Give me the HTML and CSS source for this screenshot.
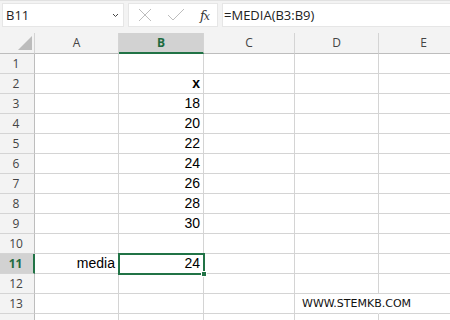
FILE: index.html
```html
<!DOCTYPE html>
<html>
<head>
<meta charset="utf-8">
<link rel="stylesheet" href="styles.css">
</head>
<body>
<div class="topbar">
  <div class="namebox"><span class="name">B11</span>
    <svg class="chev" width="7" height="5" viewBox="0 0 7 5"><path d="M1 1 L3.5 3.5 L6 1" fill="none" stroke="#444" stroke-width="1"/></svg>
  </div>
  <div class="fbtns">
    <svg class="ico" width="14" height="14" viewBox="0 0 14 14"><path d="M1 1 L13 13 M13 1 L1 13" stroke="#bdbdbd" stroke-width="1" fill="none"/></svg>
    <svg class="ico" width="18" height="14" viewBox="0 0 18 14"><path d="M1 7 L6 12 L17 1" stroke="#bdbdbd" stroke-width="1" fill="none"/></svg>
    <span class="fx"><i>f</i><i class="x">x</i></span>
  </div>
  <div class="finput">=MEDIA(B3:B9)</div>
</div>
<div class="sheet">
  <div class="corner"><svg width="14" height="14" viewBox="0 0 14 14"><path d="M14 0 L14 14 L0 14 Z" fill="#bcbcbc"/></svg></div>
  <div class="ch">A</div><div class="ch sel">B</div><div class="ch">C</div><div class="ch">D</div><div class="ch">E</div>

  <div class="rh">1</div><div class="c"></div><div class="c"></div><div class="c"></div><div class="c"></div><div class="c"></div>
  <div class="rh">2</div><div class="c"></div><div class="c num b">x</div><div class="c"></div><div class="c"></div><div class="c"></div>
  <div class="rh">3</div><div class="c"></div><div class="c num">18</div><div class="c"></div><div class="c"></div><div class="c"></div>
  <div class="rh">4</div><div class="c"></div><div class="c num">20</div><div class="c"></div><div class="c"></div><div class="c"></div>
  <div class="rh">5</div><div class="c"></div><div class="c num">22</div><div class="c"></div><div class="c"></div><div class="c"></div>
  <div class="rh">6</div><div class="c"></div><div class="c num">24</div><div class="c"></div><div class="c"></div><div class="c"></div>
  <div class="rh">7</div><div class="c"></div><div class="c num">26</div><div class="c"></div><div class="c"></div><div class="c"></div>
  <div class="rh">8</div><div class="c"></div><div class="c num">28</div><div class="c"></div><div class="c"></div><div class="c"></div>
  <div class="rh">9</div><div class="c"></div><div class="c num">30</div><div class="c"></div><div class="c"></div><div class="c"></div>
  <div class="rh">10</div><div class="c"></div><div class="c"></div><div class="c"></div><div class="c"></div><div class="c"></div>
  <div class="rh sel">11</div><div class="c num">media</div><div class="c num active">24<span class="handle"></span></div><div class="c"></div><div class="c"></div><div class="c"></div>
  <div class="rh">12</div><div class="c"></div><div class="c"></div><div class="c"></div><div class="c"></div><div class="c"></div>
  <div class="rh">13</div><div class="c"></div><div class="c"></div><div class="c"></div><div class="c wm">WWW.STEMKB.COM</div><div class="c"></div>
  <div class="rh"></div><div class="c"></div><div class="c"></div><div class="c"></div><div class="c"></div><div class="c"></div>
</div>
</body>
</html>
```
FILE: styles.css
```css
* { box-sizing: border-box; }
html, body { margin: 0; padding: 0; background: #fff; overflow: hidden; width: 450px; height: 320px; }
body { font-family: "Open Sans", "Noto Sans", sans-serif; }

.topbar {
  height: 33px;
  background: #f3f3f3;
  border-top: 1px solid #e1e1e1;
  display: flex;
  align-items: flex-start;
  padding: 2px 0 0 2px;
  gap: 4px;
}
.namebox {
  width: 122px;
  height: 24px;
  background: #fff;
  border: 1px solid #e6e6e6;
  display: flex;
  align-items: center;
  justify-content: space-between;
  padding: 0 4px 0 3px;
  font-size: 13px;
  color: #222;
}
.namebox .chev { margin-top: 1px; }
.fbtns {
  width: 90px;
  height: 24px;
  background: #fff;
  border: 1px solid #e6e6e6;
  display: flex;
  align-items: center;
  padding: 0 8px 0 9px;
  justify-content: space-between;
}
.fx {
  font-family: "DejaVu Serif", "Liberation Serif", serif;
  font-size: 13px;
  color: #333;
  letter-spacing: -1px;
}
.fx .x { font-size: 11px; }
.finput {
  flex: 1;
  height: 24px;
  background: #fff;
  border: 1px solid #e6e6e6;
  border-right: none;
  font-size: 13px;
  color: #222;
  line-height: 22px;
  padding-left: 1px;
}

.sheet {
  display: grid;
  grid-template-columns: 35px 84px 85px 91px 84px 90px;
  grid-template-rows: 21px repeat(14, 20px);
}
.corner {
  background: #f3f3f3;
  border-right: 1px solid #d4d4d4;
  border-bottom: 1px solid #bdbdbd;
  display: flex;
  align-items: flex-end;
  justify-content: flex-end;
  padding: 0 2px 3px 0;
}
.ch {
  background: #f3f3f3;
  border-right: 1px solid #d4d4d4;
  border-bottom: 1px solid #bdbdbd;
  font-size: 12px;
  color: #444;
  text-align: center;
  line-height: 19px;
}
.ch.sel {
  background: #d2d2d2;
  border-bottom: 2px solid #217346;
  color: #1e6b40;
  font-weight: 700;
}
.rh {
  background: #f3f3f3;
  border-right: 1px solid #bdbdbd;
  border-bottom: 1px solid #d4d4d4;
  font-size: 12px;
  color: #444;
  text-align: center;
  line-height: 20px;
  padding-right: 2px;
}
.rh.sel {
  background: #d2d2d2;
  color: #1e6b40;
  font-weight: 700;
  border-right: 2px solid #217346;
}
.c {
  border-right: 1px solid #d4d4d4;
  border-bottom: 1px solid #d4d4d4;
  font-family: "Liberation Sans", Arial, sans-serif;
  font-size: 14px;
  color: #000;
  line-height: 19px;
  padding: 0 3px;
  position: relative;
  white-space: nowrap;
}
.c.num { text-align: right; }
.c.b { font-weight: 700; }
.c.active {
  outline: 2px solid #217346;
  outline-offset: -1px;
  z-index: 2;
}
.handle {
  position: absolute;
  right: -4px;
  bottom: -4px;
  width: 6px;
  height: 6px;
  background: #217346;
  border: 1px solid #fff;
}
.c.wm {
  font-family: "DejaVu Sans", Verdana, sans-serif;
  font-size: 11px;
  letter-spacing: 0;
  overflow: visible;
  padding-left: 7px;
  line-height: 19px;
  color: #111;
  border-right-color: #fff;
}
```
